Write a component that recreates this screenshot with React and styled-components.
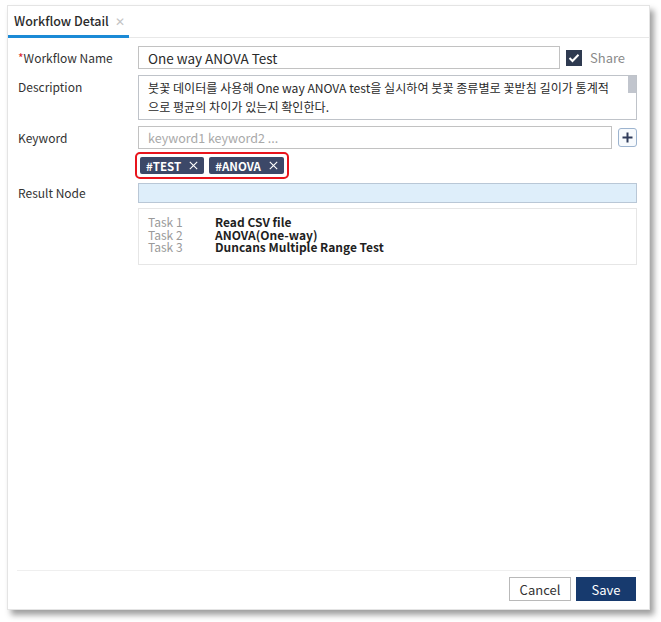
import React from 'react';
import styled, { createGlobalStyle } from 'styled-components';

const GlobalStyle = createGlobalStyle`
  html, body {
    margin: 0;
    padding: 0;
    background: #ffffff;
  }
  body {
    font-family: "Noto Sans CJK KR", "Noto Sans", sans-serif;
    font-size: 12px;
    color: #333;
  }
  * { box-sizing: border-box; }
`;

const Page = styled.div`
  width: 661px;
  height: 622px;
  padding: 5px 11px 12px 7px;
`;

const Panel = styled.div`
  width: 643px;
  height: 605px;
  background: #fff;
  border: 1px solid #e4e4e4;
  box-shadow: 4px 5px 6px rgba(0, 0, 0, 0.38);
  display: flex;
  flex-direction: column;
`;

const TabBar = styled.div`
  height: 32px;
  display: flex;
  align-items: stretch;
  border-bottom: 1px solid #e8e8e8;
`;

const Tab = styled.div`
  width: 121px;
  display: flex;
  align-items: center;
  justify-content: space-between;
  padding: 0 4px 0 6px;
  border-bottom: 3px solid #1b8ad6;
  margin-bottom: -1px;
  font-size: 12.5px;
  font-weight: 500;
  color: #2b2b2b;
  white-space: nowrap;
`;

const TabClose = styled.span`
  color: #c4c4c4;
  font-size: 12px;
  font-weight: 300;
`;

const Body = styled.div`
  flex: 1;
  padding: 8px 12px 0 10px;
  display: grid;
  grid-template-columns: 120px 1fr;
  align-content: start;
`;

const Label = styled.div`
  line-height: 23px;
  font-size: 12px;
  color: #333;
  margin-top: ${p => p.$mt || 0}px;
`;

const Required = styled.span`
  color: #d9282f;
`;

const Cell = styled.div`
  display: flex;
  align-items: center;
  gap: 6px;
  margin-top: ${p => p.$mt || 0}px;
`;

const Input = styled.div`
  flex: ${p => (p.$width ? 'none' : 1)};
  width: ${p => (p.$width ? `${p.$width}px` : 'auto')};
  height: ${p => p.$h || 23}px;
  border: 1px solid ${p => p.$border || '#c2c2c2'};
  background: ${p => p.$bg || '#fff'};
  padding: 0 9px;
  display: flex;
  align-items: center;
  font-size: ${p => (p.$placeholder ? 12.5 : 13.5)}px;
  color: ${p => (p.$placeholder ? '#a9a9a9' : '#2a2a2a')};
`;

const TextArea = styled.div`
  flex: 1;
  height: 45px;
  border: 1px solid #bfc3c9;
  padding: 2px 14px 0 9px;
  position: relative;
  font-size: 12.1px;
  line-height: 19px;
  color: #2a2a2a;
  white-space: nowrap;
`;

const ScrollThumb = styled.div`
  position: absolute;
  right: 0;
  top: 0;
  width: 8px;
  height: 17px;
  background: #c1c5cd;
`;

const Check = styled.div`
  width: 16px;
  height: 16px;
  background: #2e3a50;
  display: flex;
  align-items: center;
  justify-content: center;
`;

const ShareText = styled.span`
  color: #8a8a8a;
  font-size: 13px;
  margin-left: 2px;
`;

const PlusButton = styled.div`
  width: 19px;
  height: 19px;
  border: 1px solid #9db4cf;
  border-radius: 3px;
  background: #f7fafd;
  display: flex;
  align-items: center;
  justify-content: center;
`;

const TagFrame = styled.div`
  display: flex;
  gap: 5px;
  padding: 3px;
  border: 2px solid #e8141c;
  border-radius: 5px;
  margin-left: -3px;
`;

const Tag = styled.div`
  height: 17px;
  padding: 0 6px 0 6px;
  background: #3c4868;
  border-radius: 2px;
  display: flex;
  align-items: center;
  gap: 8px;
  color: #fff;
  font-size: 11.5px;
  font-weight: 700;
`;

const TagX = styled.span`
  display: flex;
`;

const TaskBox = styled.div`
  flex: 1;
  border: 1px solid #e6e6e6;
  padding: 7px 9px 10px 9px;
  display: grid;
  grid-template-columns: 67px 1fr;
  font-size: 12px;
  line-height: 12.5px;
`;

const TaskKey = styled.div`
  color: #9a9a9a;
`;

const TaskValue = styled.div`
  color: #1f1f1f;
  font-weight: 700;
`;

const Footer = styled.div`
  margin: 0 9px 0 9px;
  border-top: 1px solid #efefef;
  padding: 6px 4px 8px 0;
  display: flex;
  justify-content: flex-end;
  gap: 5px;
`;

const Button = styled.button`
  width: ${p => p.$w}px;
  height: 24px;
  font-family: inherit;
  font-size: 13px;
  border: 1px solid ${p => (p.$primary ? '#173a6e' : '#b9b9b9')};
  background: ${p => (p.$primary ? '#173a6e' : '#fff')};
  color: ${p => (p.$primary ? '#fff' : '#333')};
  padding: 0;
  cursor: pointer;
`;

const tasks = [
  ['Task 1', 'Read CSV file'],
  ['Task 2', 'ANOVA(One-way)'],
  ['Task 3', 'Duncans Multiple Range Test'],
];

const tags = ['#TEST', '#ANOVA'];

export default function App() {
  return (
    <>
      <GlobalStyle />
      <Page>
        <Panel>
          <TabBar>
            <Tab>
              Workflow Detail
              <TabClose>✕</TabClose>
            </Tab>
          </TabBar>

          <Body>
            <Label>
              <Required>*</Required>Workflow Name
            </Label>
            <Cell>
              <Input $width={422}>One way ANOVA Test</Input>
              <Check>
                <svg width="12" height="10" viewBox="0 0 12 10">
                  <path d="M1.5 5 L4.5 8 L10.5 1.8" fill="none" stroke="#fff" strokeWidth="2" />
                </svg>
              </Check>
              <ShareText>Share</ShareText>
            </Cell>

            <Label $mt={6}>Description</Label>
            <Cell $mt={6}>
              <TextArea>
                붓꽃 데이터를 사용해 One way ANOVA test을 실시하여 붓꽃 종류별로 꽃받침 길이가 통계적
                <br />
                으로 평균의 차이가 있는지 확인한다.
                <ScrollThumb />
              </TextArea>
            </Cell>

            <Label $mt={6}>Keyword</Label>
            <Cell $mt={6}>
              <Input $placeholder>keyword1 keyword2 ...</Input>
              <PlusButton>
                <svg width="11" height="11" viewBox="0 0 11 11">
                  <path d="M5.5 0.5 V10.5 M0.5 5.5 H10.5" stroke="#2e3a5a" strokeWidth="2" />
                </svg>
              </PlusButton>
            </Cell>

            <div />
            <Cell $mt={3}>
              <TagFrame>
                {tags.map(t => (
                  <Tag key={t}>
                    {t}
                    <TagX>
                      <svg width="9" height="9" viewBox="0 0 9 9">
                        <path d="M0.8 0.8 L8.2 8.2 M8.2 0.8 L0.8 8.2" stroke="#fff" strokeWidth="1.1" />
                      </svg>
                    </TagX>
                  </Tag>
                ))}
              </TagFrame>
            </Cell>

            <Label $mt={2}>Result Node</Label>
            <Cell $mt={2}>
              <Input $h={20} $bg="#deeefa" $border="#b9c7d6" />
            </Cell>

            <div />
            <Cell $mt={4}>
              <TaskBox>
                {tasks.map(([k, v]) => (
                  <React.Fragment key={k}>
                    <TaskKey>{k}</TaskKey>
                    <TaskValue>{v}</TaskValue>
                  </React.Fragment>
                ))}
              </TaskBox>
            </Cell>
          </Body>

          <Footer>
            <Button $w={62}>Cancel</Button>
            <Button $w={60} $primary>Save</Button>
          </Footer>
        </Panel>
      </Page>
    </>
  );
}
